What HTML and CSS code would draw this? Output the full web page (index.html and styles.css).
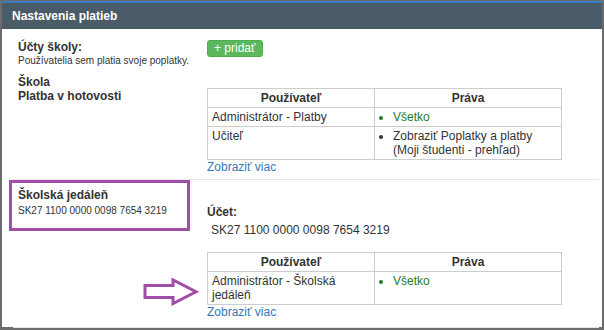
FILE: index.html
```html
<!DOCTYPE html>
<html>
<head>
  <title>Nastavenia platieb</title>
  <link rel="stylesheet" href="styles.css">
</head>
<body>

  <div class="panel">
    <div class="panel-heading">Nastavenia platieb</div>
    <div class="panel-body">

      <div class="row row-first">
        <div class="col-label">
          <div class="label">Účty školy:</div>
          <div class="hint">Používatelia sem platia svoje poplatky.</div>
        </div>
        <div class="col-value">
          <button type="button" class="btn-add">+ pridať</button>
        </div>
      </div>

      <div class="row account">
        <div class="col-label">
          <div class="label">Škola</div>
          <div class="label">Platba v hotovosti</div>
        </div>
        <div class="col-value cash">
          <table class="perm-table">
            <tr>
              <th>Používateľ</th>
              <th>Práva</th>
            </tr>
            <tr>
              <td>Administrátor - Platby</td>
              <td><ul class="all"><li>Všetko</li></ul></td>
            </tr>
            <tr>
              <td>Učiteľ</td>
              <td><ul><li>Zobraziť Poplatky a platby (Moji študenti - prehľad)</li></ul></td>
            </tr>
          </table>
          <a href="#" class="more">Zobraziť viac</a>
        </div>
      </div>

      <div class="row account last">
        <div class="col-label">
          <div class="label name">Školská jedáleň</div>
          <div class="hint">SK27 1100 0000 0098 7654 3219</div>
        </div>
        <div class="col-value bank">
          <div class="label">Účet:</div>
          <div class="iban">SK27 1100 0000 0098 7654 3219</div>
          <table class="perm-table">
            <tr>
              <th>Používateľ</th>
              <th>Práva</th>
            </tr>
            <tr>
              <td>Administrátor - Školská jedáleň</td>
              <td><ul class="all"><li>Všetko</li></ul></td>
            </tr>
          </table>
          <a href="#" class="more">Zobraziť viac</a>
        </div>
      </div>

      <!-- annotation: box around the account and arrow to the table -->
      <div class="mark-box"></div>
      <svg class="mark-arrow" width="62" height="34" viewBox="0 0 62 34">
        <polygon points="4,10.5 32,10.5 32,5 55,16.75 32,28.5 32,22.5 4,22.5" fill="none" stroke="#a14ea8" stroke-width="3"/>
      </svg>
    </div>
  </div>

</body>
</html>
```

FILE: styles.css
```css
html, body {
  background: #6c6c6c;
}

body {
  margin: 0;
  height: 330px;
  overflow: hidden;
  font-family: "Liberation Sans", Arial, sans-serif;
  font-size: 12px;
  color: #333;
}

.panel {
  margin: 1px 2px 0 2px;
  width: 600px;
  height: 326px;
  background: #fff;
  border-top: 2px solid #3b7cc2;
  box-sizing: border-box;
}

.panel-heading {
  height: 26px;
  line-height: 26px;
  padding-left: 10px;
  background: #495c67;
  color: #fff;
  font-weight: bold;
  font-size: 12px;
}

.panel-body {
  position: relative;
  padding: 0 3px 0 11px;
}

.row {
  display: flex;
  align-items: flex-start;
}

.row-first {
  padding-top: 11px;
}

.row-first .label {
  line-height: 15px;
}

.account {
  padding-top: 8px;
  padding-bottom: 5px;
  border-bottom: 1px solid #e6e6e6;
}

.account.last {
  padding-bottom: 8px;
}

.col-label {
  width: 189px;
  padding-left: 5px;
  flex-shrink: 0;
}

.col-value {
  flex: 1;
}

.label {
  font-weight: bold;
  line-height: 14px;
}

.label.name {
  margin-bottom: 3px;
}

.hint {
  font-size: 10px;
  line-height: 12px;
}

.btn-add {
  display: block;
  margin: 0;
  padding: 0 6px;
  height: 17px;
  line-height: 15px;
  background: #5cb85c;
  border: 1px solid #4cae4c;
  border-radius: 3px;
  color: #fff;
  font-family: "Liberation Sans", Arial, sans-serif;
  font-size: 12px;
}

.cash {
  padding-top: 13px;
}

.bank {
  padding-top: 17px;
}

.iban {
  margin-top: 4px;
  padding-left: 4px;
  line-height: 14px;
}

.bank .perm-table {
  margin-top: 15px;
}

.perm-table {
  width: 355px;
  border-collapse: collapse;
  table-layout: fixed;
}

.perm-table th,
.perm-table td {
  border: 1px solid #cdcdcd;
  padding: 2px 4px;
  line-height: 14px;
  vertical-align: top;
  text-align: left;
}

.perm-table th {
  text-align: center;
  font-weight: bold;
}

.perm-table th:first-child {
  width: 158px;
}

.perm-table ul {
  margin: 0;
  padding-left: 14px;
}

.perm-table ul.all {
  color: #237a23;
}

.more {
  display: block;
  line-height: 14px;
  color: #337ab7;
  text-decoration: none;
}

.mark-box {
  position: absolute;
  left: 7px;
  top: 151px;
  width: 181px;
  height: 51px;
  box-sizing: border-box;
  border: 3px solid #a14ea8;
}

.mark-arrow {
  position: absolute;
  left: 139px;
  top: 246px;
}
```
